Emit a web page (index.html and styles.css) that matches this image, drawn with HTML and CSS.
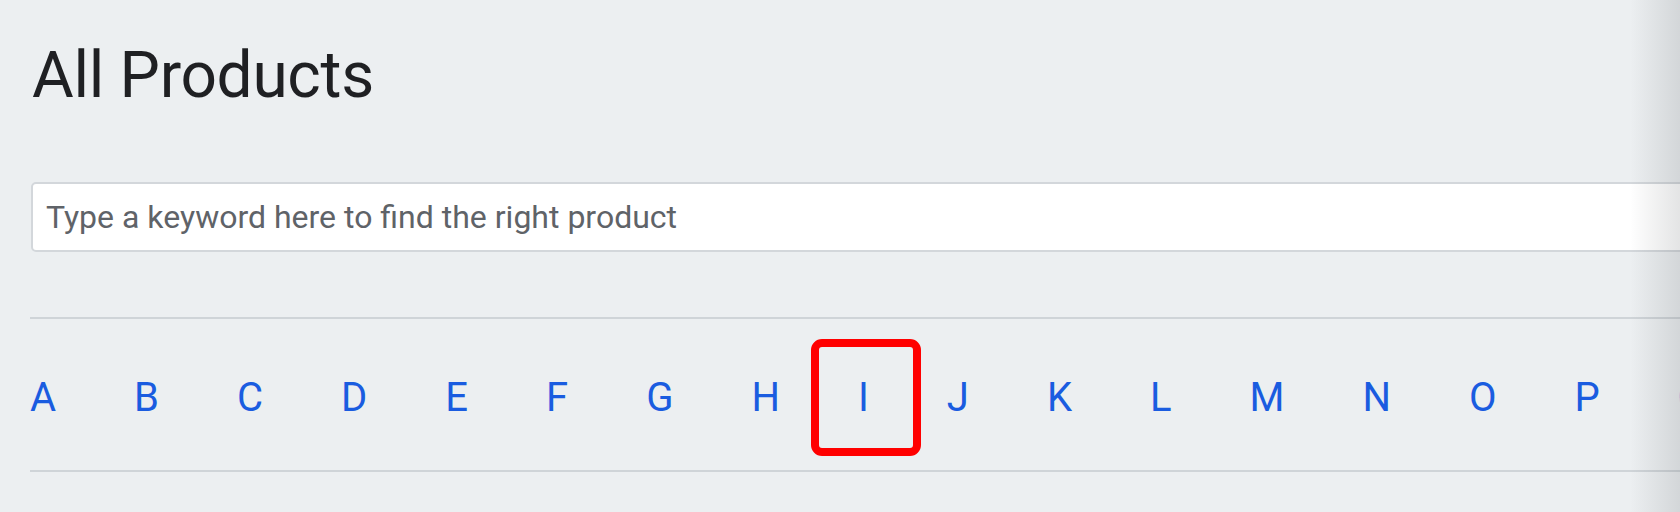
FILE: index.html
```html
<!DOCTYPE html>
<html lang="en">
<head>
<meta charset="utf-8">
<title>All Products</title>
<link rel="stylesheet" href="styles.css">
</head>
<body>
<main class="page">
  <h1 class="title">All Products</h1>
  <div class="search">
    <input class="search-input" type="text" placeholder="Type a keyword here to find the right product">
  </div>
  <nav class="alpha">
    <a class="letter" href="#a">A</a>
    <a class="letter" href="#b">B</a>
    <a class="letter" href="#c">C</a>
    <a class="letter" href="#d">D</a>
    <a class="letter" href="#e">E</a>
    <a class="letter" href="#f">F</a>
    <a class="letter" href="#g">G</a>
    <a class="letter" href="#h">H</a>
    <a class="letter letter-marked" href="#i">I<span class="mark"></span></a>
    <a class="letter" href="#j">J</a>
    <a class="letter" href="#k">K</a>
    <a class="letter" href="#l">L</a>
    <a class="letter" href="#m">M</a>
    <a class="letter" href="#n">N</a>
    <a class="letter" href="#o">O</a>
    <a class="letter" href="#p">P</a>
    <a class="letter" href="#q">Q</a>
  </nav>
</main>
<div class="edge-shade"></div>
</body>
</html>
```
FILE: styles.css
```css
html, body {
  margin: 0;
  padding: 0;
  background: #eceff1;
  overflow: hidden;
  height: 512px;
}

body {
  font-family: Roboto, "Liberation Sans", sans-serif;
  position: relative;
}

.page {
  padding: 38px 0 0 30px;
  overflow: hidden;
}

.title {
  margin: 0 0 0 2px;
  font-family: Roboto, "Liberation Sans", sans-serif;
  font-weight: 400;
  font-size: 64px;
  line-height: 76px;
  color: #1f2023;
  letter-spacing: -0.3px;
}

.search {
  margin-top: 68px;
  margin-left: 1px;
  width: 1700px;
  height: 70px;
  box-sizing: border-box;
  border: 2px solid #d3d7db;
  border-radius: 5px;
  background: #ffffff;
  display: flex;
}

.search-input {
  flex: 1;
  border: 0;
  outline: 0;
  background: transparent;
  padding: 0 0 0 13px;
  margin: 0;
  height: 66px;
  font-family: Roboto, "Liberation Sans", sans-serif;
  font-size: 32px;
  color: #202124;
}

.search-input::placeholder {
  color: #5f6368;
  opacity: 1;
}

.alpha {
  margin-top: 65px;
  width: 1700px;
  border-top: 2px solid #cfd4d8;
  border-bottom: 2px solid #cfd4d8;
  padding: 55px 0 48px 0;
  display: flex;
  gap: 78px;
  white-space: nowrap;
}

.letter {
  position: relative;
  flex: none;
  font-size: 40px;
  line-height: 48px;
  color: #1a5ce0;
  text-decoration: none;
}

.mark {
  position: absolute;
  left: -47px;
  top: -35px;
  width: 110px;
  height: 117px;
  box-sizing: border-box;
  border: 8px solid #ff0000;
  border-radius: 11px;
}

.edge-shade {
  position: absolute;
  top: 0;
  right: 0;
  width: 50px;
  height: 512px;
  background: linear-gradient(to right, rgba(60, 64, 68, 0), rgba(60, 64, 68, 0.14));
  pointer-events: none;
}
```
